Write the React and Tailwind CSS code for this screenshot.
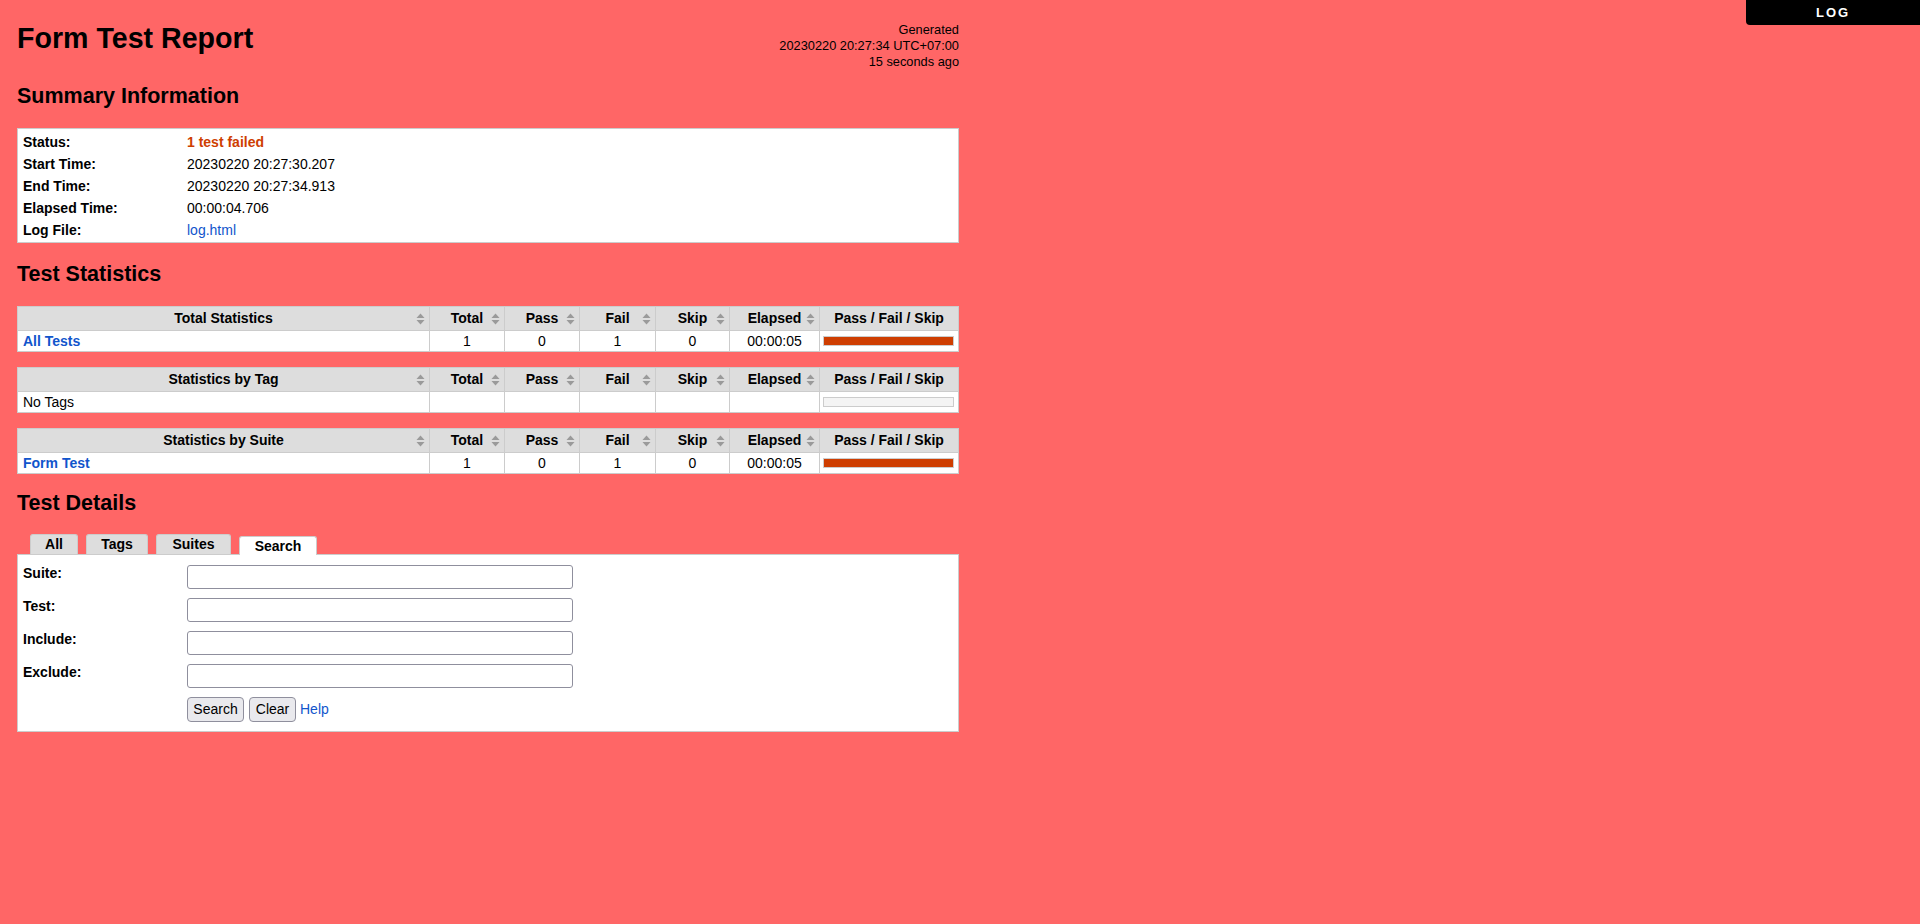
import React from "react";

const tables = [
  {
    title: "Total Statistics",
    row: { name: "All Tests", link: true, total: "1", pass: "0", fail: "1", skip: "0", elapsed: "00:00:05", failed: true },
  },
  {
    title: "Statistics by Tag",
    row: { name: "No Tags", link: false, total: "", pass: "", fail: "", skip: "", elapsed: "", failed: false },
  },
  {
    title: "Statistics by Suite",
    row: { name: "Form Test", link: true, total: "1", pass: "0", fail: "1", skip: "0", elapsed: "00:00:05", failed: true },
  },
];

const summary = [
  { label: "Status:", value: "1 test failed", kind: "fail" },
  { label: "Start Time:", value: "20230220 20:27:30.207" },
  { label: "End Time:", value: "20230220 20:27:34.913" },
  { label: "Elapsed Time:", value: "00:00:04.706" },
  { label: "Log File:", value: "log.html", kind: "link" },
];

function SortIcon() {
  return (
    <svg
      width="9"
      height="12"
      viewBox="0 0 9 12"
      className="absolute right-[4px] top-1/2 -translate-y-1/2"
    >
      <path d="M4.5 0.5L8.5 5H0.5Z" fill="#9a9a9a" />
      <path d="M4.5 11.5L8.5 7H0.5Z" fill="#9a9a9a" />
    </svg>
  );
}

function StatTable({ title, row, first }) {
  const heads = ["Total", "Pass", "Fail", "Skip", "Elapsed"];
  const cells = [row.total, row.pass, row.fail, row.skip, row.elapsed];
  return (
    <div
      className={`w-[942px] border border-[#ccc] bg-white ${first ? "mt-[19px]" : "mt-[15px]"}`}
    >
      <div className="grid grid-cols-[411px_75px_75px_76px_74px_90px_1fr] h-[24px] bg-[#ddd] border-b border-[#ccc] font-bold leading-[23px]">
        <div className="relative text-center">
          {title}
          <SortIcon />
        </div>
        {heads.map((h) => (
          <div key={h} className="relative text-center border-l border-[#ccc]">
            {h}
            <SortIcon />
          </div>
        ))}
        <div className="text-center border-l border-[#ccc]">Pass / Fail / Skip</div>
      </div>
      <div className="grid grid-cols-[411px_75px_75px_76px_74px_90px_1fr] h-[20px] leading-[20px]">
        <div className="pl-[5px]">
          {row.link ? (
            <a href="#" className="font-bold text-[#15c]">
              {row.name}
            </a>
          ) : (
            row.name
          )}
        </div>
        {cells.map((c, i) => (
          <div key={i} className="text-center border-l border-[#ccc]">
            {c}
          </div>
        ))}
        <div className="border-l border-[#ccc] flex items-center pl-[3px] pr-[4px]">
          <div
            className={`w-full h-[10px] border border-[#ccc] ${row.failed ? "bg-[#ce3e01]" : "bg-[#f4f4f4]"}`}
          />
        </div>
      </div>
    </div>
  );
}

export default function App() {
  const fields = ["Suite:", "Test:", "Include:", "Exclude:"];

  return (
    <div className="relative min-h-screen bg-[#f66] font-['Liberation_Sans',Arial,sans-serif] text-[14px] text-black pl-[17px] pb-10">
      {/* log link */}
      <a
        href="#"
        className="absolute top-0 right-0 w-[174px] h-[25px] bg-black rounded-bl-[4px] text-white font-bold text-[13px] tracking-[0.15em] flex items-center justify-center"
      >
        LOG
      </a>

      {/* header */}
      <div className="w-[942px] pt-[22px] flex justify-between items-start">
        <h1 className="text-[28.6px] leading-[33px] font-bold">Form Test Report</h1>
        <div className="text-right text-[12.8px] leading-[16px]">
          <div>Generated</div>
          <div>20230220 20:27:34 UTC+07:00</div>
          <div>15 seconds ago</div>
        </div>
      </div>

      {/* summary */}
      <h2 className="mt-[14px] text-[21.5px] leading-[25px] font-bold">Summary Information</h2>
      <div className="mt-[19px] w-[942px] border border-[#ccc] bg-white pt-[2px] pb-[1px] pl-[5px]">
        {summary.map((s) => (
          <div key={s.label} className="grid grid-cols-[164px_1fr] h-[22px] leading-[22px]">
            <div className="font-bold">{s.label}</div>
            <div>
              {s.kind === "fail" ? (
                <span className="font-bold text-[#ce3e01]">{s.value}</span>
              ) : s.kind === "link" ? (
                <a href="#" className="text-[#15c]">
                  {s.value}
                </a>
              ) : (
                s.value
              )}
            </div>
          </div>
        ))}
      </div>

      {/* statistics */}
      <h2 className="mt-[19px] text-[21.5px] leading-[25px] font-bold">Test Statistics</h2>
      {tables.map((t, i) => (
        <StatTable key={t.title} title={t.title} row={t.row} first={i === 0} />
      ))}

      {/* details */}
      <h2 className="mt-[17px] text-[21.5px] leading-[25px] font-bold">Test Details</h2>
      <div className="mt-[18px] flex items-end gap-[8px] pl-[13px] h-[20px]">
        <div className="w-[48px] h-[20px] bg-[#ddd] border border-b-0 border-[#ccc] rounded-t-[3px] font-bold flex items-center justify-center">
          All
        </div>
        <div className="w-[62px] h-[20px] bg-[#ddd] border border-b-0 border-[#ccc] rounded-t-[3px] font-bold flex items-center justify-center">
          Tags
        </div>
        <div className="w-[75px] h-[20px] bg-[#ddd] border border-b-0 border-[#ccc] rounded-t-[3px] font-bold flex items-center justify-center">
          Suites
        </div>
        <div className="relative z-10 -mb-px w-[78px] h-[19px] bg-white border border-b-0 border-[#ccc] rounded-t-[3px] font-bold flex items-center justify-center">
          Search
        </div>
      </div>
      <div className="w-[942px] border border-[#ccc] bg-white pt-[7px] pb-[9px] pl-[5px]">
        {fields.map((f) => (
          <div key={f} className="flex items-start h-[33px]">
            <div className="w-[164px] font-bold leading-[22px]">{f}</div>
            <input
              type="text"
              className="mt-[3px] w-[386px] h-[24px] border border-[#8f8f9d] rounded-[3px] bg-white outline-none"
            />
          </div>
        ))}
        <div className="flex items-start">
          <div className="w-[164px]" />
          <div className="mt-[3px] flex items-center">
            <button className="w-[57px] h-[25px] border border-[#8f8f9d] rounded-[4px] bg-[#e9e9ed] text-[14px]">
              Search
            </button>
            <button className="ml-[5px] w-[47px] h-[25px] border border-[#8f8f9d] rounded-[4px] bg-[#e9e9ed] text-[14px]">
              Clear
            </button>
            <a href="#" className="ml-[4px] text-[#15c]">
              Help
            </a>
          </div>
        </div>
      </div>
    </div>
  );
}
